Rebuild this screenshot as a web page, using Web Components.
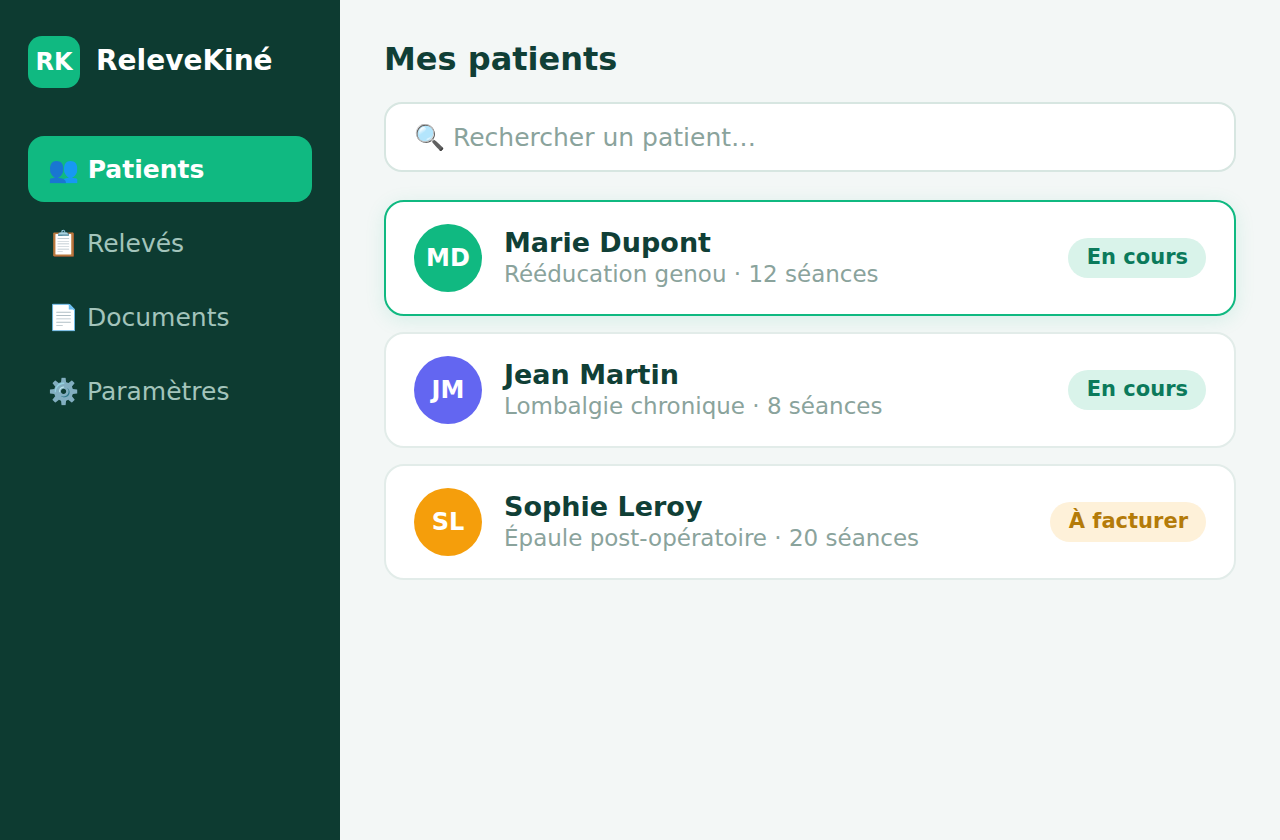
<!DOCTYPE html>
<html lang="fr">
<head>
<meta charset="utf-8">
<meta name="viewport" content="width=device-width, initial-scale=1">
<title>ReleveKiné</title>
<style>
body { margin: 0; font-family: "DejaVu Sans", sans-serif; color: #103f36; background: #f3f7f6; }
</style>
</head>
<body>
<rk-app></rk-app>
<script>
const define = (name, html, setup) => {
  const template = document.createElement('template');
  template.innerHTML = '<style>*{box-sizing:border-box}:host{box-sizing:border-box}</style>' + html;
  customElements.define(name, class extends HTMLElement {
    connectedCallback() {
      if (this.shadowRoot) return;
      const root = this.attachShadow({ mode: 'open' });
      root.append(template.content.cloneNode(true));
      if (setup) setup(this, root);
    }
  });
};

define('rk-brand', `
<style>
:host { display: flex; align-items: center; gap: 16px; font-weight: 700; color: #fff; }
.logo { display: grid; place-items: center; width: 52px; height: 52px; border-radius: 14px; background: #10b981; font-size: 24px; }
.name { font-size: 28px; line-height: 32px; padding-bottom: 2px; }
</style>
<span class="logo">RK</span><span class="name"><slot></slot></span>`);

define('rk-nav-item', `
<style>
:host { display: block; }
a { display: block; padding: 18px 20px 16px; border-radius: 16px; font-size: 25px; line-height: 32px; color: #a3c4bb; text-decoration: none; white-space: nowrap; }
:host([active]) a { background: #10b981; color: #fff; font-weight: 700; }
</style>
<a href="#"><slot></slot></a>`, (host, root) => {
  if (host.hasAttribute('active')) root.querySelector('a').setAttribute('aria-current', 'page');
});

define('rk-search', `
<style>
:host { display: block; }
input { display: block; width: 100%; height: 70px; padding: 0 28px; border: 2px solid #d7e6e1; border-radius: 18px; background: #fff; color: #103f36; font: 25px "DejaVu Sans", sans-serif; outline: none; }
input::placeholder { color: #8aa39c; opacity: 1; }
</style>
<input type="text" aria-label="Rechercher un patient" placeholder="🔍 Rechercher un patient…">`);

define('rk-badge', `
<style>
:host { display: block; padding: 6px 18px 8px 19px; border-radius: 20px; background: #d9f3ea; color: #0b7a5b; font-size: 21px; line-height: 26px; font-weight: 700; white-space: nowrap; }
:host([tone="due"]) { background: #fef1d9; color: #b47b09; }
</style>
<slot></slot>`);

define('rk-patient', `
<style>
:host { display: flex; align-items: center; gap: 22px; padding: 22px 28px; border: 2px solid #e2ece9; border-radius: 20px; background: #fff; }
:host([selected]) { border-color: #10b981; box-shadow: 0 4px 20px rgba(16, 185, 129, 0.12); }
.avatar { display: grid; place-items: center; flex: none; width: 68px; height: 68px; border-radius: 50%; background: var(--avatar); color: #fff; font-size: 24px; font-weight: 700; }
.info { flex: 1; min-width: 0; }
h2 { margin: 0; font-size: 27px; line-height: 32px; }
p { margin: 0; font-size: 23px; line-height: 30px; color: #8aa39c; }
</style>
<span class="avatar"><slot name="initials"></slot></span>
<div class="info"><h2><slot name="name"></slot></h2><p><slot name="care"></slot></p></div>
<slot name="status"></slot>`);

define('rk-app', `
<style>
:host { display: grid; grid-template-columns: 340px 1fr; min-height: 100vh; }
aside { padding: 36px 28px; background: #0d3b31; }
nav { display: grid; gap: 8px; margin-top: 48px; }
main { padding: 40px 44px; min-width: 0; }
h1 { margin: 0 0 24px; font-size: 32px; line-height: 38px; }
.list { display: grid; gap: 16px; margin-top: 28px; }
</style>
<aside>
  <rk-brand>ReleveKiné</rk-brand>
  <nav aria-label="Navigation">
    <rk-nav-item active>👥 Patients</rk-nav-item>
    <rk-nav-item>📋 Relevés</rk-nav-item>
    <rk-nav-item>📄 Documents</rk-nav-item>
    <rk-nav-item>⚙️ Paramètres</rk-nav-item>
  </nav>
</aside>
<main>
  <h1>Mes patients</h1>
  <rk-search></rk-search>
  <div class="list">
    <rk-patient selected style="--avatar:#10b981">
      <span slot="initials">MD</span><span slot="name">Marie Dupont</span><span slot="care">Rééducation genou · 12 séances</span><rk-badge slot="status">En cours</rk-badge>
    </rk-patient>
    <rk-patient style="--avatar:#6366f1">
      <span slot="initials">JM</span><span slot="name">Jean Martin</span><span slot="care">Lombalgie chronique · 8 séances</span><rk-badge slot="status">En cours</rk-badge>
    </rk-patient>
    <rk-patient style="--avatar:#f59e0b">
      <span slot="initials">SL</span><span slot="name">Sophie Leroy</span><span slot="care">Épaule post-opératoire · 20 séances</span><rk-badge slot="status" tone="due">À facturer</rk-badge>
    </rk-patient>
  </div>
</main>`);
</script>
</body>
</html>
